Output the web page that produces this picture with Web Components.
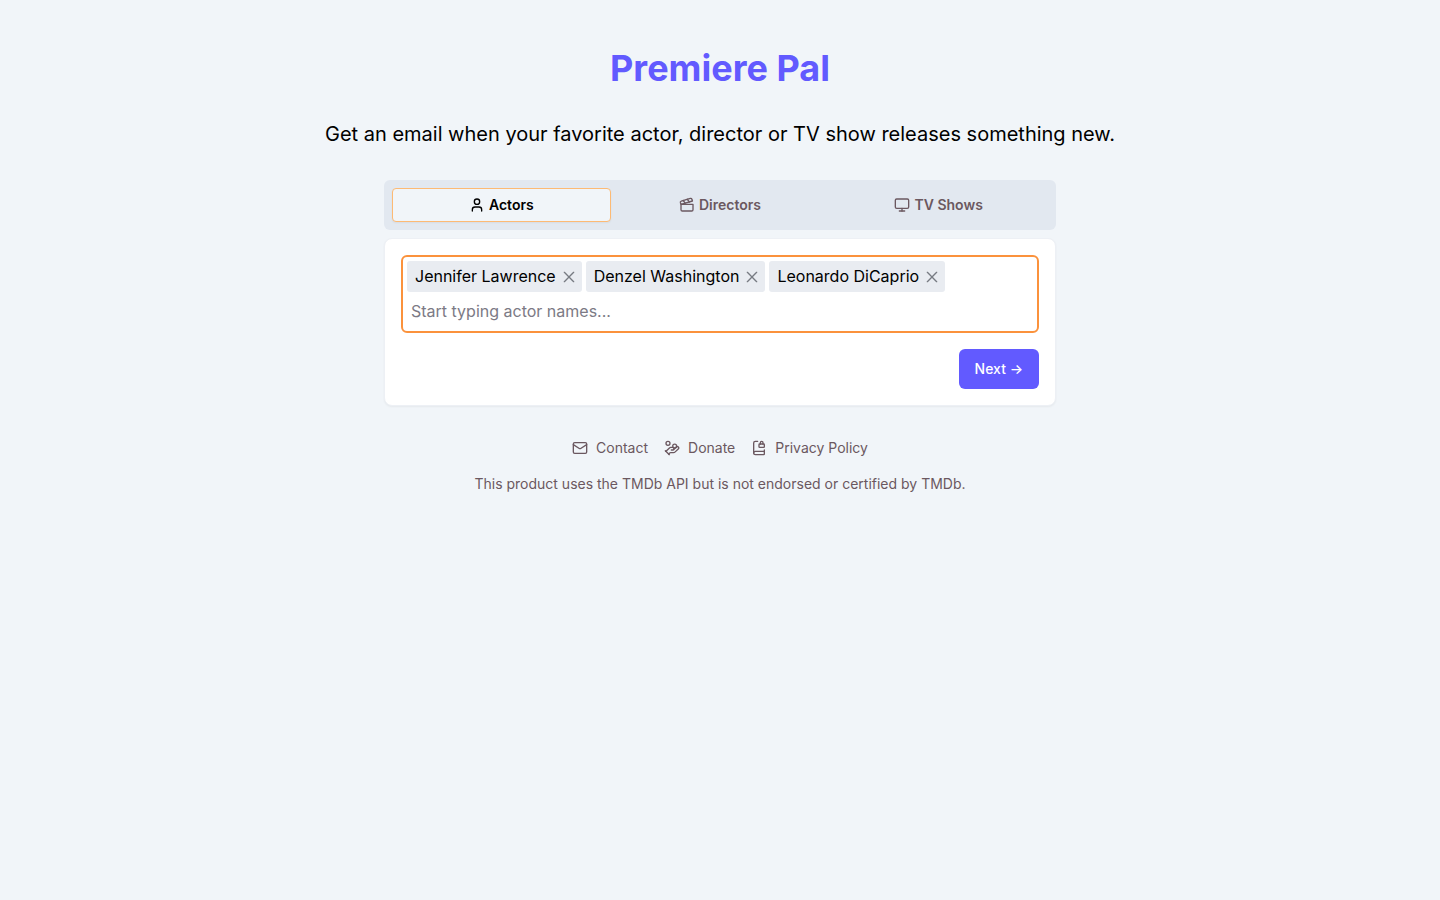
<!DOCTYPE html>
<html lang="en">
<head>
<meta charset="utf-8">
<meta name="viewport" content="width=device-width, initial-scale=1">
<title>Premiere Pal</title>
<style>
    body {
        margin: 0;
        min-height: 100vh;
        background: #f1f5f9;
        color: #000;
        font-family: Inter, "Liberation Sans", sans-serif;
        font-size: 16px;
        line-height: 24px;
    }
</style>
</head>
<body>

<premiere-app>
    <span slot="title">Premiere Pal</span>
    <span slot="tagline">Get an email when your favorite actor, director or TV show releases something new.</span>

    <tab-bar>
        <tab-item icon="user" selected>Actors</tab-item>
        <tab-item icon="clapperboard">Directors</tab-item>
        <tab-item icon="monitor">TV Shows</tab-item>
    </tab-bar>

    <picker-card>
        <tag-field placeholder="Start typing actor names..." label="Actor names">
            <name-tag>Jennifer Lawrence</name-tag>
            <name-tag>Denzel Washington</name-tag>
            <name-tag>Leonardo DiCaprio</name-tag>
        </tag-field>
        <next-button slot="actions">Next →</next-button>
    </picker-card>

    <site-footer slot="footer">
        <footer-link icon="mail" href="#contact">Contact</footer-link>
        <footer-link icon="hand-coins" href="#donate">Donate</footer-link>
        <footer-link icon="book-lock" href="#privacy">Privacy Policy</footer-link>
        <span slot="note">This product uses the TMDb API but is not endorsed or certified by TMDb.</span>
    </site-footer>
</premiere-app>

<template id="premiere-app">
    <style>
        :host {
            display: flex;
            flex-direction: column;
            align-items: center;
            padding: 48px 16px;
        }

        h1 {
            margin: 0;
            color: #625aff;
            font-size: 36px;
            line-height: 40px;
            font-weight: 700;
        }

        p {
            margin: 32px 0;
            font-size: 20px;
            line-height: 28px;
            text-align: center;
        }

        main {
            display: flex;
            flex-direction: column;
            gap: 8px;
            width: 100%;
            max-width: 672px;
        }
    </style>
    <h1><slot name="title"></slot></h1>
    <p><slot name="tagline"></slot></p>
    <main><slot></slot></main>
    <slot name="footer"></slot>
</template>

<template id="tab-bar">
    <style>
        :host {
            display: flex;
            padding: 8px;
            border-radius: 6px;
            background: #e2e8f0;
        }
    </style>
    <slot></slot>
</template>

<template id="tab-item">
    <style>
        :host {
            display: flex;
            flex: 1;
        }

        button {
            display: flex;
            flex: 1;
            align-items: center;
            justify-content: center;
            gap: 4px;
            padding: 6px 12px;
            border: 1px solid transparent;
            border-radius: 4px;
            background: none;
            color: #6b5860;
            font-family: inherit;
            font-size: 14px;
            line-height: 20px;
            font-weight: 600;
            cursor: pointer;
        }

        :host([selected]) button {
            border-color: #fdba74;
            background: #f1f5f9;
            color: #000;
            box-shadow: 0 1px 2px rgba(0, 0, 0, 0.05);
        }
    </style>
    <button type="button" role="tab"><ui-icon></ui-icon><slot></slot></button>
</template>

<template id="picker-card">
    <style>
        :host {
            display: flex;
            flex-direction: column;
            gap: 16px;
            padding: 16px;
            border: 1px solid #edf0f5;
            border-radius: 8px;
            background: #fff;
            box-shadow: 0 1px 2px rgba(0, 0, 0, 0.05);
        }

        .actions {
            display: flex;
            justify-content: flex-end;
        }
    </style>
    <slot></slot>
    <div class="actions"><slot name="actions"></slot></div>
</template>

<template id="tag-field">
    <style>
        :host {
            display: flex;
            flex-direction: column;
            gap: 4px;
            padding: 4px;
            border: 2px solid #fb923c;
            border-radius: 6px;
        }

        .tags {
            display: flex;
            flex-wrap: wrap;
            gap: 4px;
        }

        input {
            width: 100%;
            box-sizing: border-box;
            padding: 3px 4px 4px;
            border: 0;
            outline: 0;
            background: none;
            font-family: inherit;
            font-size: 16px;
            line-height: 24px;
            height: 31px;
        }

        input::placeholder {
            color: #7c7a85;
            opacity: 1;
        }
    </style>
    <div class="tags"><slot></slot></div>
    <input type="text">
</template>

<template id="name-tag">
    <style>
        :host {
            display: inline-flex;
            align-items: center;
            gap: 4px;
            padding: 3px 4px 4px 8px;
            border-radius: 3px;
            background: #e9ecf1;
        }

        button {
            display: flex;
            padding: 2px 1px 0;
            border: 0;
            background: none;
            color: #777b82;
            cursor: pointer;
        }
    </style>
    <span><slot></slot></span>
    <button type="button"><ui-icon name="x"></ui-icon></button>
</template>

<template id="next-button">
    <style>
        :host {
            display: block;
        }

        button {
            padding: 10px 16px;
            border: 0;
            border-radius: 6px;
            background: #625aff;
            color: #fff;
            font-family: inherit;
            font-size: 14px;
            line-height: 20px;
            font-weight: 500;
            cursor: pointer;
        }
    </style>
    <button type="button"><slot></slot></button>
</template>

<template id="site-footer">
    <style>
        :host {
            display: flex;
            flex-direction: column;
            align-items: center;
            gap: 16px;
            margin-top: 32px;
            color: #6b5860;
            font-size: 14px;
            line-height: 20px;
            text-align: center;
        }

        nav {
            display: flex;
            flex-wrap: wrap;
            gap: 16px;
        }
    </style>
    <nav><slot></slot></nav>
    <slot name="note"></slot>
</template>

<template id="footer-link">
    <style>
        :host {
            display: block;
        }

        a {
            display: flex;
            align-items: center;
            gap: 8px;
            color: inherit;
            text-decoration: none;
        }
    </style>
    <a><ui-icon></ui-icon><slot></slot></a>
</template>

<script>
    (function(){
        const icons = {
            'user': '<path d="M19 21v-2a4 4 0 0 0-4-4H9a4 4 0 0 0-4 4v2"/><circle cx="12" cy="7" r="4"/>',
            'clapperboard': '<path d="M20.2 6 3 11l-.9-2.4c-.3-1.1.3-2.2 1.3-2.5l13.5-4c1.1-.3 2.2.3 2.5 1.3Z"/><path d="m6.2 5.3 3.1 3.9"/><path d="m12.4 3.4 3.1 4"/><path d="M3 11h18v8a2 2 0 0 1-2 2H5a2 2 0 0 1-2-2Z"/>',
            'monitor': '<rect width="20" height="14" x="2" y="3" rx="2"/><path d="M8 21h8"/><path d="M12 17v4"/>',
            'mail': '<rect width="20" height="16" x="2" y="4" rx="2"/><path d="m22 7-8.97 5.7a1.94 1.94 0 0 1-2.06 0L2 7"/>',
            'hand-coins': '<path d="M11 15h2a2 2 0 1 0 0-4h-3c-.6 0-1.1.2-1.4.6L3 17"/><path d="m7 21 1.6-1.4c.3-.4.8-.6 1.4-.6h4c1.1 0 2.1-.4 2.8-1.2l4.6-4.4a2 2 0 0 0-2.75-2.91l-4.2 3.9"/><path d="m2 16 6 6"/><circle cx="16" cy="9" r="2.9"/><circle cx="6" cy="5" r="3"/>',
            'book-lock': '<path d="M18 6V4a2 2 0 1 0-4 0v2"/><path d="M20 15v6a1 1 0 0 1-1 1H6.5a1 1 0 0 1 0-5H20"/><path d="M4 19.5v-15A2.5 2.5 0 0 1 6.5 2H10"/><rect x="12" y="6" width="8" height="5" rx="1"/>',
            'x': '<path d="M19 5 5 19"/><path d="m5 5 14 14"/>'
        };

        // base class: clones the template that has the element's own name
        class TemplateElement extends HTMLElement {
            constructor() {
                super();
                const template = document.getElementById(this.localName);
                this.attachShadow({mode: 'open'}).appendChild(template.content.cloneNode(true));
            }

            _findEle(selector) {
                return this.shadowRoot.querySelector(selector);
            }
        }

        class UiIcon extends HTMLElement {
            static get observedAttributes() {
                return ['name'];
            }

            constructor() {
                super();
                this.attachShadow({mode: 'open'});
            }

            attributeChangedCallback(attrName, oldVal, newVal) {
                this.shadowRoot.innerHTML = `
                    <style>
                        :host { display: block; width: 16px; height: 16px; flex: none; }
                        svg { display: block; }
                    </style>
                    <svg width="16" height="16" viewBox="0 0 24 24" fill="none" stroke="currentColor"
                        stroke-width="2" stroke-linecap="round" stroke-linejoin="round"
                        aria-hidden="true">${icons[newVal] || ''}</svg>`;
            }
        }

        class TabBar extends TemplateElement {
            connectedCallback() {
                this.setAttribute('role', 'tablist');
                this.addEventListener('click', (e) => {
                    const tab = e.target.closest('tab-item');
                    if(!tab) {
                        return;
                    }
                    this.querySelectorAll('tab-item').forEach((ele) => {
                        ele.toggleAttribute('selected', ele === tab);
                    });
                });
            }
        }

        class TabItem extends TemplateElement {
            static get observedAttributes() {
                return ['selected'];
            }

            connectedCallback() {
                this._findEle('ui-icon').setAttribute('name', this.getAttribute('icon'));
                this._updateSelected();
            }

            attributeChangedCallback() {
                this._updateSelected();
            }

            _updateSelected() {
                this._findEle('button').setAttribute('aria-selected', this.hasAttribute('selected'));
            }
        }

        class TagField extends TemplateElement {
            connectedCallback() {
                const input = this._findEle('input');
                input.placeholder = this.getAttribute('placeholder');
                input.setAttribute('aria-label', this.getAttribute('label'));
            }
        }

        class NameTag extends TemplateElement {
            connectedCallback() {
                const button = this._findEle('button');
                button.setAttribute('aria-label', 'Remove ' + this.textContent);
                button.addEventListener('click', () => this.remove());
            }
        }

        class FooterLink extends TemplateElement {
            connectedCallback() {
                this._findEle('ui-icon').setAttribute('name', this.getAttribute('icon'));
                this._findEle('a').href = this.getAttribute('href');
            }
        }

        customElements.define('ui-icon', UiIcon);
        customElements.define('premiere-app', class extends TemplateElement {});
        customElements.define('tab-bar', TabBar);
        customElements.define('tab-item', TabItem);
        customElements.define('picker-card', class extends TemplateElement {});
        customElements.define('tag-field', TagField);
        customElements.define('name-tag', NameTag);
        customElements.define('next-button', class extends TemplateElement {});
        customElements.define('site-footer', class extends TemplateElement {});
        customElements.define('footer-link', FooterLink);
    }());
</script>
</body>
</html>
